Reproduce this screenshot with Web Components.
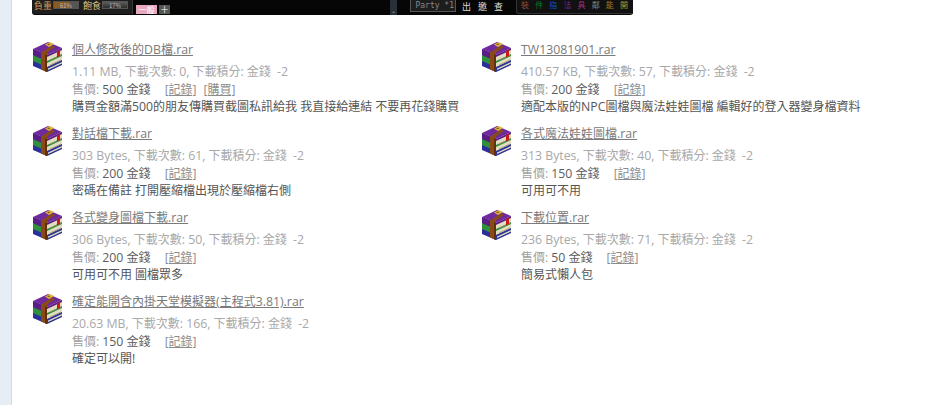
<!DOCTYPE html>
<html lang="zh-Hant">
<head>
<meta charset="utf-8">
<title>附件</title>
<style>
  html, body { margin: 0; height: 100%; background: #fff; }
  body { font-family: "Open Sans", "Noto Sans CJK TC", sans-serif; font-size: 12px; overflow: hidden; }
</style>
</head>
<body>
<forum-page>
  <game-strip></game-strip>
  <attach-list>
    <attach-item name="個人修改後的DB檔.rar" stats="1.11 MB, 下載次數: 0, 下載積分: 金錢  -2" price="500" buy desc="購買金額滿500的朋友傳購買截圖私訊給我 我直接給連結 不要再花錢購買"></attach-item>
    <attach-item name="TW13081901.rar" stats="410.57 KB, 下載次數: 57, 下載積分: 金錢  -2" price="200" desc="適配本版的NPC圖檔與魔法娃娃圖檔 編輯好的登入器變身檔資料"></attach-item>
    <attach-item name="對話檔下載.rar" stats="303 Bytes, 下載次數: 61, 下載積分: 金錢  -2" price="200" desc="密碼在備註 打開壓縮檔出現於壓縮檔右側"></attach-item>
    <attach-item name="各式魔法娃娃圖檔.rar" stats="313 Bytes, 下載次數: 40, 下載積分: 金錢  -2" price="150" desc="可用可不用"></attach-item>
    <attach-item name="各式變身圖檔下載.rar" stats="306 Bytes, 下載次數: 50, 下載積分: 金錢  -2" price="200" desc="可用可不用 圖檔眾多"></attach-item>
    <attach-item name="下載位置.rar" stats="236 Bytes, 下載次數: 71, 下載積分: 金錢  -2" price="50" desc="簡易式懶人包"></attach-item>
    <attach-item name="確定能開含內掛天堂模擬器(主程式3.81).rar" stats="20.63 MB, 下載次數: 166, 下載積分: 金錢  -2" price="150" desc="確定可以開!"></attach-item>
  </attach-list>
</forum-page>

<script>
// latin runs are a bit bigger than the 12px CJK in the reference
const latin = text => text.replace(/[\x21-\x7e]+/g, m => `<span class="l">${m}</span>`)

class ForumPage extends HTMLElement {
  constructor () {
    super()
    this.attachShadow({ mode: 'open' })
  }

  connectedCallback () {
    this.shadowRoot.innerHTML = /* html */`
      <style>
        :host { display: block; height: 405px; box-sizing: border-box; background: #fff; }
        .wrap { display: grid; grid-template-columns: 11px 1px 1fr; height: 100%; }
        .side { background: #e6edf5; }
        .line { background: #cfdbe9; }
        .main { padding-left: 20px; }
      </style>
      <div class="wrap">
        <div class="side"></div>
        <div class="line"></div>
        <div class="main"><slot></slot></div>
      </div>
    `
  }
}

class GameStrip extends HTMLElement {
  constructor () {
    super()
    this.attachShadow({ mode: 'open' })
  }

  connectedCallback () {
    const slots = [
      ['裝', '#8a4a32'], ['件', '#0e7a2c'], ['指', '#0f55b5'], ['法', '#6c2a8c'],
      ['具', '#a02e86'], ['鄰', '#8a8a8a'], ['能', '#b5741d'], ['開', '#b5952f']
    ].map(([t, c]) => `<b style="color:${c}">${t}</b>`).join('')

    this.shadowRoot.innerHTML = /* html */`
      <style>
        :host { display: block; width: 601px; height: 15px; background: #060606; color: #ccc;
          font: 9px "Noto Sans CJK TC", sans-serif; border-bottom-left-radius: 3px; border-bottom-right-radius: 3px; overflow: hidden; }
        .bar { display: flex; height: 15px; }
        .stats { display: flex; align-items: flex-start; width: 101px; height: 14px; box-sizing: border-box; padding-left: 2px;
          background: #1e1e1e; border-right: 1px solid #3a3a3a; border-bottom-left-radius: 3px; color: #d9c48c; flex: none; white-space: nowrap; line-height: 11px; }
        .stats .w { color: #cf9a5c; }
        .gauge { box-sizing: border-box; width: 26px; height: 8px; margin: 1px 0 0 1px; font-size: 6px; line-height: 7px; text-align: center; color: #bbb;
          background: linear-gradient(#5c5c5c, #2c2c2c); border: 1px solid #555; overflow: hidden; }
        .gauge.load { background: linear-gradient(90deg, #8a5a1e 62%, #555 62%); margin-right: 4px; }
        .tab { margin: 5px 0 0 3px; width: 21px; height: 9px; background: #e8a9c0; color: #fff; font-size: 8px; line-height: 9px; text-align: center; flex: none; }
        .plus { margin: 5px 0 0 2px; width: 11px; height: 9px; background: #555; color: #fff; font-size: 7px; line-height: 9px; text-align: center; flex: none; }
        .gap { flex: 1; }
        .arrow { width: 7px; height: 15px; background: #2a3038; color: #aaa; font-size: 6px; line-height: 22px; text-align: center; flex: none; }
        .party { box-sizing: border-box; margin-left: 13px; width: 46px; height: 12px; border: 1px solid #555; border-top: 0; background: #1d1d1d; color: #888;
          font: 8px/11px "DejaVu Sans Mono", monospace; text-align: right; padding-right: 1px; flex: none; white-space: nowrap; }
        .cmd { display: flex; gap: 7px; margin-left: 6px; width: 48px; color: #ddd; font-size: 9px; line-height: 13px; flex: none; }
        .menu { display: flex; justify-content: space-between; box-sizing: border-box; margin-left: 6px; width: 117px; height: 14px; padding: 0 5px 0 4px;
          background: #111; border-left: 1px solid #333; border-bottom: 1px solid #333; border-bottom-left-radius: 3px; font-size: 8px; line-height: 10px; flex: none; }
        .menu b { font-weight: 400; }
      </style>
      <div class="bar">
        <div class="stats">
          <span class="w">負重</span><span class="gauge load">61%</span>
          <span>飽食</span><span class="gauge">17%</span>
        </div>
        <span class="tab">一般</span>
        <span class="plus">十</span>
        <span class="gap"></span>
        <span class="arrow">⌄</span>
        <span class="party">Party *1</span>
        <span class="cmd"><span>出</span><span>邀</span><span>查</span></span>
        <span class="menu">${slots}</span>
      </div>
    `
  }
}

class AttachList extends HTMLElement {
  constructor () {
    super()
    this.attachShadow({ mode: 'open' })
  }

  connectedCallback () {
    this.shadowRoot.innerHTML = /* html */`
      <style>
        :host { display: grid; grid-template-columns: 449px 449px; grid-auto-rows: 84px; padding-top: 26px; }
      </style>
      <slot></slot>
    `
  }
}

class AttachItem extends HTMLElement {
  constructor () {
    super()
    this.attachShadow({ mode: 'open' })
  }

  connectedCallback () {
    const links = this.hasAttribute('buy')
      ? '<a>[記錄]</a><a>[購買]</a>'
      : '<a>[記錄]</a>'

    this.shadowRoot.innerHTML = /* html */`
      <style>
        :host { display: flex; gap: 8px; color: #555; font-size: 12px; }
        svg { flex: none; width: 32px; height: 32px; }
        .info { margin-top: -1px; }
        .row { height: 17px; line-height: 17px; white-space: pre; }
        .l { font-size: 12.3px; }
        .name { height: 19px; line-height: 19px; margin-bottom: 3px; color: #7a7a7a; text-decoration: underline; }
        .stats { height: 19px; line-height: 19px; color: #a8a8a8; }
        .price { color: #a0a0a0; }
        .price em { font-style: normal; color: #5c5c5c; }
        .price a { color: #8c8c8c; text-decoration: underline; margin-left: 7px; }
        .price a:first-of-type { margin-left: 11px; }
      </style>
      <svg viewBox="0 0 32 32" aria-hidden="true">
        <path d="M1 8l14 6v17L1 25z" fill="#2a2f9a"/>
        <path d="M1 14l14 6v6L1 20z" fill="#2f8f3a"/>
        <path d="M1 8l14 6v6L1 14z" fill="#5a1d85"/>
        <path d="M15 14l15-7v17l-15 7z" fill="#e4dec0"/>
        <path d="M15 26l15-7v5l-15 7z" fill="#2b3196"/>
        <path d="M16 27.5l14-6.5v1.5l-14 6.5z" fill="#e4dec0"/>
        <path d="M15 20l15-7v2l-15 7z" fill="#2f8f3a"/>
        <path d="M15 14l15-7v2l-15 7z" fill="#5a1d85"/>
        <path d="M18 19l11-5M18 24l11-5" stroke="#9a9678" stroke-width=".8"/>
        <path d="M25 10.5l3-1.5v6l-3 1.5z" fill="#d01818"/>
        <path d="M1 8l15-7 14 6-15 7z" fill="#6f2a9e"/>
        <path d="M9 11.5l11-7 3 1.5-8 5.5v19.5l-6-2.500z" fill="#8a4a18"/>
        <path d="M13 13.200l2 .8v17l-2-.8z" fill="#5e300c"/>
        <path d="M13 3.500l5-2.500 4 2-5 3z" fill="#e0b93a"/>
        <path d="M15 3.500l2-1 1.500 .8-2 1z" fill="#7a5a10"/>
      </svg>
      <div class="info">
        <div class="row name">${latin(this.getAttribute('name'))}</div>
        <div class="row stats">${latin(this.getAttribute('stats'))}</div>
        <div class="row price">售價: <em>${latin(this.getAttribute('price'))} 金錢</em> ${links}</div>
        <div class="row desc">${latin(this.getAttribute('desc'))}</div>
      </div>
    `
  }
}

customElements.define('forum-page', ForumPage)
customElements.define('game-strip', GameStrip)
customElements.define('attach-list', AttachList)
customElements.define('attach-item', AttachItem)
</script>
</body>
</html>
